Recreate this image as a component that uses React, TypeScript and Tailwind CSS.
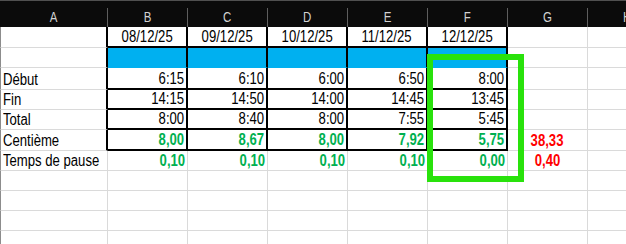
const W = ["w-[108px]", "w-[80px]", "w-[80px]", "w-[80px]", "w-[80px]", "w-[80px]", "w-[80px]", "w-[80px]"];
const letters = ["A", "B", "C", "D", "E", "F", "G", "H"];

type Kind = "plain" | "date" | "blue" | "box";

type Row = {
  h: string;
  kind: Kind;
  label?: string;
  values?: string[];
  green?: boolean;
  extra?: string;
};

const rows: Row[] = [
  { h: "h-[21px]", kind: "date", values: ["08/12/25", "09/12/25", "10/12/25", "11/12/25", "12/12/25"] },
  { h: "h-[20px]", kind: "blue" },
  { h: "h-[22px]", kind: "box", label: "Début", values: ["6:15", "6:10", "6:00", "6:50", "8:00"] },
  { h: "h-[20px]", kind: "box", label: "Fin", values: ["14:15", "14:50", "14:00", "14:45", "13:45"] },
  { h: "h-[20px]", kind: "box", label: "Total", values: ["8:00", "8:40", "8:00", "7:55", "5:45"] },
  { h: "h-[21px]", kind: "box", label: "Centième", values: ["8,00", "8,67", "8,00", "7,92", "5,75"], green: true, extra: "38,33" },
  { h: "h-[20px]", kind: "plain", label: "Temps de pause", values: ["0,10", "0,10", "0,10", "0,10", "0,00"], green: true, extra: "0,40" },
  { h: "h-[20px]", kind: "plain" },
  { h: "h-[20px]", kind: "plain" },
  { h: "h-[20px]", kind: "plain" },
  { h: "h-[20px]", kind: "plain" },
];

// no narrow face installed, so text is squeezed to Arial Narrow proportions
function Cell({ i, row }: { i: number; row: Row }) {
  const framed = row.kind !== "plain";
  const inBox = framed && i >= 1 && i <= 5;
  const blackRight = framed && i <= 5;

  const right = blackRight ? "border-r-2 border-r-black" : "border-r border-r-[#dadada]";
  let bottom = "border-b border-b-[#dadada]";
  if (inBox && row.kind === "blue") bottom = "border-b border-b-[#00b0f0]";
  else if (inBox) bottom = "border-b-2 border-b-black";
  const left = i === 0 ? "border-l border-l-[#8c8c8c]" : "";
  const bg = inBox && row.kind === "blue" ? "bg-[#00b0f0]" : "";

  let text = "";
  let align = "justify-end pr-[2px]";
  let origin = "origin-right";
  let color = "text-black";
  if (i === 0) {
    text = row.label ?? "";
    align = "justify-start pl-[2px]";
    origin = "origin-left";
  } else if (i <= 5) {
    text = row.values?.[i - 1] ?? "";
    if (row.kind === "date") {
      align = "justify-center";
      origin = "origin-center";
    }
    if (row.green) color = "text-[#00b050] font-bold";
  } else if (i === 6) {
    text = row.extra ?? "";
    align = "justify-center";
    origin = "origin-center";
    color = "text-[#ff0000] font-bold";
  }

  return (
    <div className={`flex items-end shrink-0 h-full pb-[1px] text-[16px] leading-[16px] whitespace-nowrap ${W[i]} ${right} ${bottom} ${left} ${bg} ${align} ${color}`}>
      {text && <span className={`inline-block scale-x-[0.82] ${origin}`}>{text}</span>}
    </div>
  );
}

export default function App() {
  return (
    <div className="relative w-[626px] h-[244px] overflow-hidden bg-white font-['Liberation_Sans',Arial,sans-serif]">
      <div className="flex h-[27px] bg-[#0b0b0b] border-t border-t-[#505050]">
        {letters.map((l, i) => (
          <div key={l} className={`flex items-end shrink-0 h-full ${W[i]}`}>
            <div className="flex items-center justify-center w-full h-[19px] border-r border-r-[#5e5e5e] text-[14px] text-[#d2d2d2]">
              <span className="inline-block scale-x-[0.82]">{l}</span>
            </div>
          </div>
        ))}
      </div>

      {rows.map((row, r) => (
        <div key={r} className={`flex ${row.h}`}>
          {W.map((_, i) => (
            <Cell key={i} i={i} row={row} />
          ))}
        </div>
      ))}

      <div className="absolute left-[427px] top-[54px] w-[97px] h-[128px] border-[6px] border-[#29e20c] pointer-events-none" />
    </div>
  );
}
